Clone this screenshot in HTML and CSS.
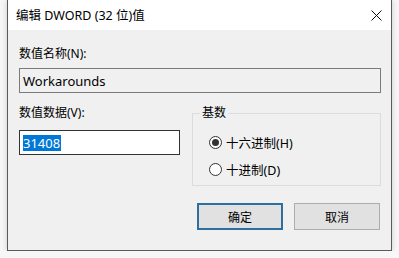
FILE: index.html
```html
<!DOCTYPE html>
<html lang="zh-CN">

<head>
    <meta charset="UTF-8">
    <meta name="viewport" content="width=device-width, initial-scale=1.0">
    <title>编辑 DWORD (32 位)值</title>
    <link rel="stylesheet" href="styles.css">
</head>

<body>
    <div class="window">
        <div class="titlebar">
            <span class="title">编辑 DWORD (32 位)值</span>
            <svg class="close" width="11" height="11" viewBox="0 0 11 11">
                <path d="M0.5 0.5 L10.5 10.5 M10.5 0.5 L0.5 10.5" stroke="#111" stroke-width="1" fill="none" />
            </svg>
        </div>
        <div class="content">
            <div class="label">数值名称(N):</div>
            <div class="field readonly">Workarounds</div>
            <div class="row">
                <div class="data">
                    <div class="label">数值数据(V):</div>
                    <div class="field edit"><span class="selected">31408</span></div>
                </div>
                <fieldset class="base">
                    <legend>基数</legend>
                    <div class="radio"><span class="dot checked"></span>十六进制(H)</div>
                    <div class="radio"><span class="dot"></span>十进制(D)</div>
                </fieldset>
            </div>
            <div class="buttons">
                <div class="btn default">确定</div>
                <div class="btn">取消</div>
            </div>
        </div>
    </div>
</body>

</html>
```

FILE: styles.css
```css
* {
    margin: 0;
    padding: 0;
    box-sizing: border-box;
}

body {
    background-color: #f7f7f7;
    font-family: "Noto Sans", "Noto Sans CJK SC", sans-serif;
    font-size: 12px;
    color: #000;
}

.window {
    width: 385px;
    height: 251px;
    margin-left: 7px;
    border: 1px solid #5a5a5a;
    border-top: none;
    background-color: #f0f0f0;
    box-shadow: 0 0 6px rgba(0, 0, 0, .18);
    display: flex;
    flex-direction: column;
}

.titlebar {
    height: 30px;
    background-color: #fff;
    display: flex;
    align-items: center;
    justify-content: space-between;
    padding: 0 9px 0 8px;
}

.title {
    font-size: 12.5px;
    line-height: 16px;
    margin-top: 2px;
}

.close {
    display: block;
    margin-top: 1px;
}

.content {
    padding: 16px 10px 0 11px;
}

.label {
    line-height: 16px;
}

.field {
    height: 25px;
    border: 1px solid #7a7a7a;
    display: flex;
    align-items: center;
    padding-left: 3px;
    font-size: 13px;
}

.readonly {
    margin-top: 6px;
    background-color: #f0f0f0;
}

.row {
    display: flex;
    justify-content: space-between;
    margin-top: 12px;
}

.data {
    width: 161px;
}

.edit {
    margin-top: 9px;
    background-color: #fff;
    border-color: #333;
}

.selected {
    background-color: #0078d7;
    color: #fff;
    line-height: 16px;
    padding-right: 1px;
}

.base {
    width: 189px;
    height: 81px;
    border: 1px solid #dcdcdc;
    padding: 13px 0 0 7px;
    margin-top: 0;
}

legend {
    padding: 0 2px;
    line-height: 16px;
    font-size: 12px;
}

.radio {
    display: flex;
    align-items: center;
    height: 16px;
    margin-left: 9px;
    margin-bottom: 11px;
    font-size: 12.5px;
}

.dot {
    width: 13px;
    height: 13px;
    border: 1px solid #333;
    border-radius: 50%;
    background-color: #fff;
    margin-right: 4px;
    display: flex;
    align-items: center;
    justify-content: center;
}

.checked::after {
    content: "";
    width: 7px;
    height: 7px;
    border-radius: 50%;
    background-color: #333;
}

.buttons {
    display: flex;
    justify-content: flex-end;
    gap: 11px;
    margin-top: 17px;
    padding-right: 1px;
}

.btn {
    width: 86px;
    height: 27px;
    border: 1px solid #adadad;
    background-color: #e1e1e1;
    display: flex;
    align-items: center;
    justify-content: center;
}

.default {
    border: 2px solid #2f6f9f;
}
```
